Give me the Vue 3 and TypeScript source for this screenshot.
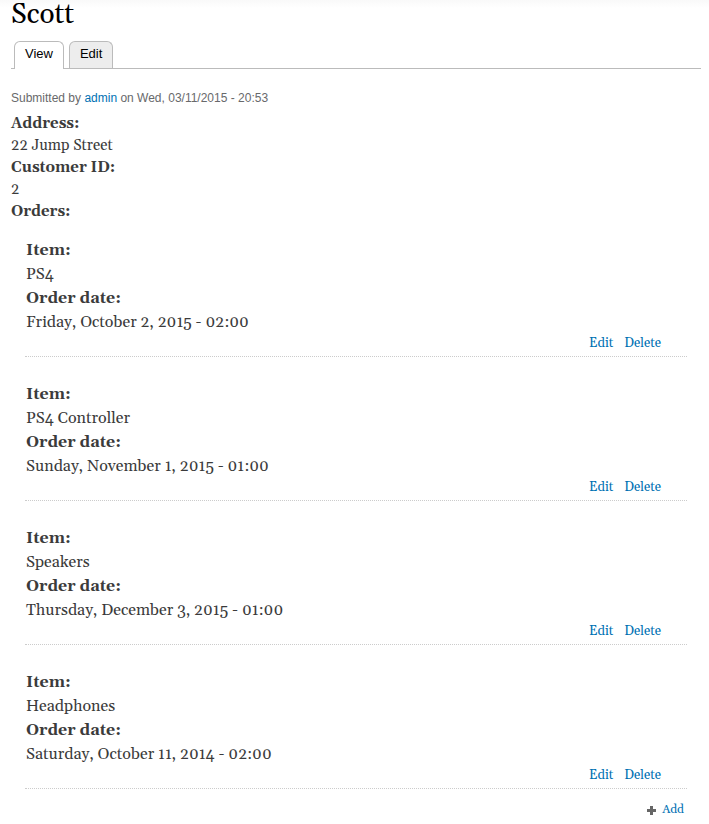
<script setup lang="ts">
interface Order {
  item: string
  date: string
}

const orders: Order[] = [
  { item: 'PS4', date: 'Friday, October 2, 2015 - 02:00' },
  { item: 'PS4 Controller', date: 'Sunday, November 1, 2015 - 01:00' },
  { item: 'Speakers', date: 'Thursday, December 3, 2015 - 01:00' },
  { item: 'Headphones', date: 'Saturday, October 11, 2014 - 02:00' },
]
</script>

<template>
  <main class="page">
    <h1 class="title">Scott</h1>
    <nav class="tabs" aria-label="Primary tabs">
      <a class="tab active" href="#view" aria-current="page">View</a>
      <a class="tab" href="#edit">Edit</a>
    </nav>
    <p class="submitted">Submitted by <a href="#admin">admin</a> on Wed, 03/11/2015 - 20:53</p>
    <dl class="fields">
      <dt>Address:</dt>
      <dd>22 Jump Street</dd>
      <dt>Customer ID:</dt>
      <dd>2</dd>
    </dl>
    <h2 class="orders-label">Orders:</h2>
    <section class="orders">
      <div class="order-list">
        <article v-for="order in orders" :key="order.item" class="order">
          <dl class="order-fields">
            <dt>Item:</dt>
            <dd>{{ order.item }}</dd>
            <dt>Order date:</dt>
            <dd>{{ order.date }}</dd>
          </dl>
          <div class="actions">
            <a href="#edit-order">Edit</a>
            <a href="#delete-order">Delete</a>
          </div>
        </article>
      </div>
      <div class="add-row">
        <a class="add" href="#add-order">
          <svg width="9" height="9" viewBox="0 0 9 9" aria-hidden="true">
            <path d="M3 0h3v3h3v3H6v3H3V6H0V3h3z" fill="#666" />
          </svg>
          Add
        </a>
      </div>
    </section>
  </main>
</template>

<style>
body {
  margin: 0;
  background: #fff;
}
</style>

<style scoped>
.page {
  padding: 0 8px 0 11px;
  background: linear-gradient(#f9f9f9, #fff 8px);
  color: #3b3b3b;
  font-family: Georgia, Gelasio, "DejaVu Serif", "Liberation Serif", serif;
}
.title {
  margin: 0;
  padding-bottom: 11px;
  font-size: 28px;
  line-height: 30px;
  font-weight: 400;
  color: #000;
}
a {
  color: #0071b3;
  text-decoration: none;
}
dl, dd, dt {
  margin: 0;
}
.tabs {
  display: flex;
  gap: 5px;
  padding: 0 3px;
  border-bottom: 1px solid #bbb;
  font-family: "Liberation Sans", Arial, sans-serif;
  font-size: 13px;
}
.tab {
  padding: 0 10px 2px;
  border: 1px solid #bbb;
  border-bottom: 0;
  border-radius: 6px 6px 0 0;
  background: #ededed;
  color: #000;
  line-height: 24px;
}
.tab.active {
  margin-bottom: -1px;
  padding-bottom: 3px;
  background: #fff;
}
.submitted {
  margin: 20px 0 6px;
  font: 12px/18px "Liberation Sans", Arial, sans-serif;
  color: #68696b;
}
.fields, .orders-label {
  margin: 0;
  font-size: 15px;
  line-height: 22px;
}
dt {
  font-weight: 700;
}
.orders {
  padding: 15px 14px 0;
}
.order-list {
  display: grid;
  gap: 25px;
}
.order {
  border-bottom: 1px dotted #ccc;
}
.order-fields {
  padding-left: 1px;
  font-size: 16px;
  line-height: 24px;
}
.actions {
  display: flex;
  justify-content: flex-end;
  gap: 11px;
  padding: 0 26px 4px;
  font-size: 13px;
  line-height: 18px;
}
.add-row {
  display: flex;
  justify-content: flex-end;
  padding: 12px 3px 0 0;
  font-size: 12px;
  line-height: 18px;
}
.add {
  display: flex;
  align-items: center;
  gap: 6px;
}
</style>
